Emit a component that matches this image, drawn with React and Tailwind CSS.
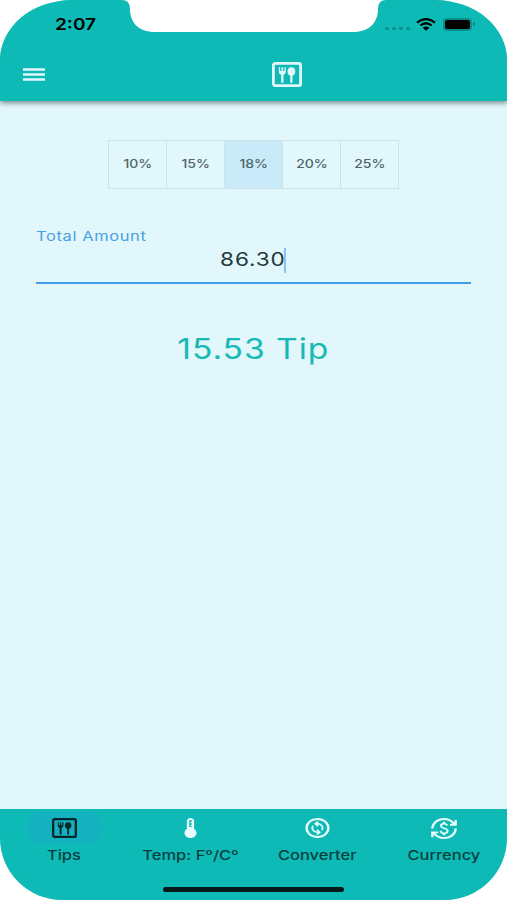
import { useState } from "react";
import { MdThermostat, MdOutlineChangeCircle, MdCurrencyExchange } from "react-icons/md";

const PERCENTS = [10, 15, 18, 20, 25];

function TrayIcon({ className }) {
  return (
    <svg viewBox="0 0 30 25" preserveAspectRatio="none" className={className} fill="none">
      <rect x="1.4" y="1.4" width="27.2" height="22.2" rx="1.8" stroke="currentColor" strokeWidth="2.8" />
      <path
        d="M6.8 5.3V9.5Q6.8 12 9.1 12.6V20.7H11.5V12.6Q13.8 12 13.8 9.5V5.3H12.4V9.1H11.1V5.3H9.5V9.1H8.2V5.3Z"
        fill="currentColor"
      />
      <ellipse cx="19.4" cy="9.4" rx="3.9" ry="4.2" fill="currentColor" />
      <path d="M18.2 11H20.5V20.7H18.2Z" fill="currentColor" />
    </svg>
  );
}

const TABS = [
  { label: "Tips", icon: <TrayIcon className="w-[25px] h-[20px]" /> },
  { label: "Temp: Fº/Cº", icon: <MdThermostat preserveAspectRatio="none" className="w-[29px] h-[24px]" /> },
  { label: "Converter", icon: <MdOutlineChangeCircle preserveAspectRatio="none" className="w-[29px] h-[24px]" /> },
  { label: "Currency", icon: <MdCurrencyExchange preserveAspectRatio="none" className="w-[28px] h-[23px]" /> },
];

function StatusBar() {
  return (
    <div className="h-12 flex items-start justify-between pl-[55px] pr-[32px] pt-[14px] text-black">
      <span className="inline-block origin-left scale-x-[1.19] text-[16px] leading-[21px] font-semibold">2:07</span>
      <div className="flex items-center h-5">
        <div className="flex gap-[3px] mt-2 mr-[6px]">
          {[0, 1, 2, 3].map((d) => (
            <span key={d} className="w-[4px] h-[3px] rounded-full bg-[#0b8f8b]" />
          ))}
        </div>
        <svg viewBox="0 0 20 13" className="w-5 h-[13px] mr-[7px]" fill="none" stroke="currentColor">
          <path d="M1 4.6Q10 -2.4 19 4.6" strokeWidth="2.3" />
          <path d="M4.3 7.5Q10 3 15.7 7.5" strokeWidth="2.2" />
          <path d="M6.6 9.8Q10 7 13.4 9.8L10 12.8Z" fill="currentColor" stroke="none" />
        </svg>
        <div className="w-[29px] h-[13px] rounded-[4px] border-2 border-[#0a8f8c] p-0">
          <div className="h-full rounded-[2px] bg-black" />
        </div>
        <div className="w-[2px] h-1 ml-px rounded-r bg-[#0a8582]" />
      </div>
    </div>
  );
}

function Header() {
  return (
    <header className="relative z-10 h-[101px] shrink-0 bg-[#0dbab5] shadow-[0_2px_5px_rgba(0,0,0,0.45)]">
      <StatusBar />
      <div className="grid grid-cols-[253px_1fr] items-center h-[52px] text-[#e1f7fc]">
        <button className="ml-[23px] w-[22px]">
          <svg viewBox="0 0 22 13" className="w-[22px] h-[13px]" stroke="currentColor" strokeWidth="2.4">
            <path d="M0 1.5H22M0 6.5H22M0 11.5H22" />
          </svg>
        </button>
        <TrayIcon className="w-[30px] h-[25px] ml-[19px]" />
      </div>
      {/* notch */}
      <svg viewBox="0 0 264 32" className="absolute top-0 left-[122px] w-[264px] h-8" fill="white">
        <path d="M0 0Q8 0 8 9C8 22 16 32 33 32H231C248 32 256 22 256 9Q256 0 264 0Z" />
      </svg>
    </header>
  );
}

function App() {
  const [percent, setPercent] = useState(18);
  const [tab, setTab] = useState("Tips");
  const amount = 86.3;

  return (
    <div className="bg-white font-['Inter',sans-serif]">
      <div className="relative flex flex-col w-[507px] h-[900px] overflow-hidden bg-[#e1f7fc] rounded-t-[72px_60px] rounded-b-[62px_62px]">
        <Header />

        <main className="flex-1 flex flex-col items-center px-9 pt-[39px]">
          <div className="flex w-[291px] h-[49px] border border-[#cbe3e8] divide-x divide-[#cbe3e8]">
            {PERCENTS.map((p) => (
              <button
                key={p}
                onClick={() => setPercent(p)}
                className={`flex-1 text-[11.5px] font-medium text-[#4f666b] ${percent === p ? "bg-[#c9eaf8]" : ""}`}
              >
                <span className="inline-block scale-x-[1.22]">{p}%</span>
              </button>
            ))}
          </div>

          <div className="w-full mt-[37px] h-[58px] border-b-2 border-[#439fe3]">
            <label className="block h-5 leading-[20px] text-[13.5px] text-[#4a9fe4] tracking-[0.5px]">
              <span className="inline-block origin-left scale-x-[1.22]">Total Amount</span>
            </label>
            <div className="flex justify-center items-center h-[28px] pl-[5px] text-[18.5px] text-[#25363b]">
              <span className="inline-block scale-x-[1.22] tracking-[0.7px]">{amount.toFixed(2)}</span>
              <span className="w-[2px] h-[25px] ml-[5px] bg-[#83c5f4]" />
            </div>
          </div>

          <p className="mt-[45px] text-[28px] leading-[40px] text-[#17b9b3]">
            <span className="inline-block scale-x-[1.2] tracking-[0.8px]">{((amount * percent) / 100).toFixed(2)} Tip</span>
          </p>
        </main>

        <nav className="h-[91px] shrink-0 bg-[#0dbab5]">
          <div className="grid grid-cols-4 h-[78px] pt-[3px] pl-px">
            {TABS.map((t) => (
              <button key={t.label} onClick={() => setTab(t.label)} className="flex flex-col items-center">
                <span
                  className={`flex items-center justify-center w-[75px] h-8 rounded-full ${
                    tab === t.label ? "bg-[#14b1c0] text-[#06282a]" : "text-[#e9fbfc]"
                  }`}
                >
                  {t.icon}
                </span>
                <span className="inline-block scale-x-[1.22] text-[13.5px] leading-[22px] font-medium whitespace-nowrap text-[#093f40]">
                  {t.label}
                </span>
              </button>
            ))}
          </div>
          <div className="w-[181px] h-[5px] mx-auto rounded-full bg-[#071819]" />
        </nav>
      </div>
    </div>
  );
}

export default App;
